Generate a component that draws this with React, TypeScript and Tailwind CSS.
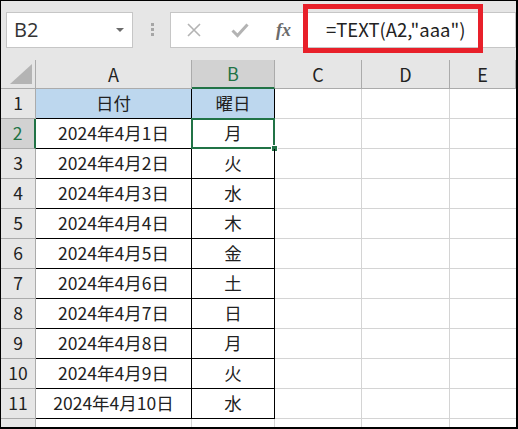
const dates = [
  '2024年4月1日',
  '2024年4月2日',
  '2024年4月3日',
  '2024年4月4日',
  '2024年4月5日',
  '2024年4月6日',
  '2024年4月7日',
  '2024年4月8日',
  '2024年4月9日',
  '2024年4月10日',
];
const days = ['月', '火', '水', '木', '金', '土', '日', '月', '火', '水'];

const font = { fontFamily: '"Noto Sans CJK JP", "Noto Sans", sans-serif' };

function Toolbar() {
  return (
    <div className="relative flex h-[59px] items-start bg-[#e6e6e6] pt-[11px]">
      <div className="ml-[5px] flex h-[36px] w-[127px] items-center justify-between border border-[#c6c6c6] bg-white pl-[7px] pr-[8px]">
        <span className="text-[20px] text-[#333]" style={{ fontFamily: '"Open Sans", sans-serif' }}>
          B2
        </span>
        <span className="h-0 w-0 border-x-[4px] border-t-[4px] border-x-transparent border-t-[#6b6b6b]" />
      </div>
      <div className="ml-[18px] mt-[11px] flex flex-col gap-[2px]">
        <span className="h-[3px] w-[3px] bg-[#a6a6a6]" />
        <span className="h-[3px] w-[3px] bg-[#a6a6a6]" />
        <span className="h-[3px] w-[3px] bg-[#a6a6a6]" />
      </div>
      <div className="ml-[16px] flex h-[36px] flex-1 items-center border border-[#c6c6c6] bg-white">
        <svg width="16" height="16" viewBox="0 0 16 16" className="ml-[15px]">
          <path d="M2 2 L14 14 M14 2 L2 14" stroke="#b3b3b3" strokeWidth="1.6" fill="none" />
        </svg>
        <svg width="18" height="16" viewBox="0 0 18 16" className="ml-[29px]">
          <path d="M1.5 8.5 L6.5 13.5 L16.5 2.5" stroke="#b3b3b3" strokeWidth="3" fill="none" />
        </svg>
        <span
          className="ml-[27px] text-[18px] font-bold italic text-[#6b6b6b]"
          style={{ fontFamily: '"Liberation Serif", serif' }}
        >
          fx
        </span>
        <span className="ml-[35px] text-[18.5px] text-[#222]" style={font}>
          =TEXT(A2,"aaa")
        </span>
      </div>
      <div className="pointer-events-none absolute left-[302px] top-[3px] h-[49px] w-[180px] border-[5px] border-[#e8202a]" />
    </div>
  );
}

const cols = [
  { key: 'A', w: 'w-[156px]' },
  { key: 'B', w: 'w-[83px]' },
  { key: 'C', w: 'w-[87px]' },
  { key: 'D', w: 'w-[88px]' },
  { key: 'E', w: 'flex-1' },
];

function HeaderRow() {
  return (
    <div className="flex h-[29px] bg-[#e6e6e6]">
      <div className="flex w-[35px] shrink-0 items-end justify-end border-r border-b border-[#ababab] pb-[4px] pr-[3px]">
        <span className="h-0 w-0 border-r-[22px] border-t-[20px] border-r-[#b4b4b4] border-t-transparent" />
      </div>
      {cols.map((c) =>
        c.key === 'B' ? (
          <div
            key={c.key}
            className={`${c.w} flex shrink-0 items-center justify-center border-r border-[#ababab] border-b-2 border-b-[#217346] bg-[#d2d2d2] text-[18px] text-[#217346]`}
            style={font}
          >
            {c.key}
          </div>
        ) : (
          <div
            key={c.key}
            className={`${c.w} flex shrink-0 items-center justify-center border-r border-b border-[#ababab] text-[18px] text-[#222]`}
            style={font}
          >
            {c.key}
          </div>
        ),
      )}
    </div>
  );
}

function DataRow({ n, a, b }: { n: number; a: string; b: string }) {
  const head = n === 1;
  const sel = n === 2;
  return (
    <div className="flex h-[30px] bg-white" style={font}>
      <div
        className={`flex w-[35px] shrink-0 items-center justify-center border-b border-[#ababab] text-[17.5px] ${
          sel ? 'border-r-2 border-r-[#217346] bg-[#d2d2d2] text-[#217346]' : 'border-r border-r-[#ababab] bg-[#e6e6e6] text-[#222]'
        }`}
      >
        {n}
      </div>
      <div
        className={`flex w-[156px] shrink-0 items-center justify-center border-r border-b border-black text-[17.5px] text-[#222] ${
          head ? 'bg-[#bdd7ee]' : ''
        }`}
      >
        {a}
      </div>
      <div
        className={`relative flex w-[83px] shrink-0 items-center justify-center border-r border-b border-black text-[17.5px] text-[#222] ${
          head ? 'bg-[#bdd7ee]' : ''
        }`}
      >
        {b}
        {sel && (
          <>
            <div className="pointer-events-none absolute -left-[1px] -top-[1px] -right-[1px] -bottom-[1px] border-2 border-[#217346]" />
            <div className="absolute -bottom-[4px] -right-[4px] h-[7px] w-[7px] border border-white bg-[#217346]" />
          </>
        )}
      </div>
      <div className="w-[87px] shrink-0 border-r border-b border-[#d4d4d4]" />
      <div className="w-[88px] shrink-0 border-r border-b border-[#d4d4d4]" />
      <div className="flex-1 border-b border-[#d4d4d4]" />
    </div>
  );
}

export default function App() {
  return (
    <div className="h-[429px] w-[518px] overflow-hidden border-t border-l border-r-2 border-b-2 border-black bg-white">
      <Toolbar />
      <HeaderRow />
      <DataRow n={1} a="日付" b="曜日" />
      {dates.map((d, i) => (
        <DataRow key={d} n={i + 2} a={d} b={days[i]} />
      ))}
      <div className="flex h-[30px] bg-white">
        <div className="w-[35px] shrink-0 border-r border-[#ababab] bg-[#e6e6e6]" />
        <div className="w-[156px] shrink-0 border-r border-[#d4d4d4]" />
        <div className="w-[83px] shrink-0 border-r border-[#d4d4d4]" />
        <div className="w-[87px] shrink-0 border-r border-[#d4d4d4]" />
        <div className="w-[88px] shrink-0 border-r border-[#d4d4d4]" />
        <div className="flex-1" />
      </div>
    </div>
  );
}
